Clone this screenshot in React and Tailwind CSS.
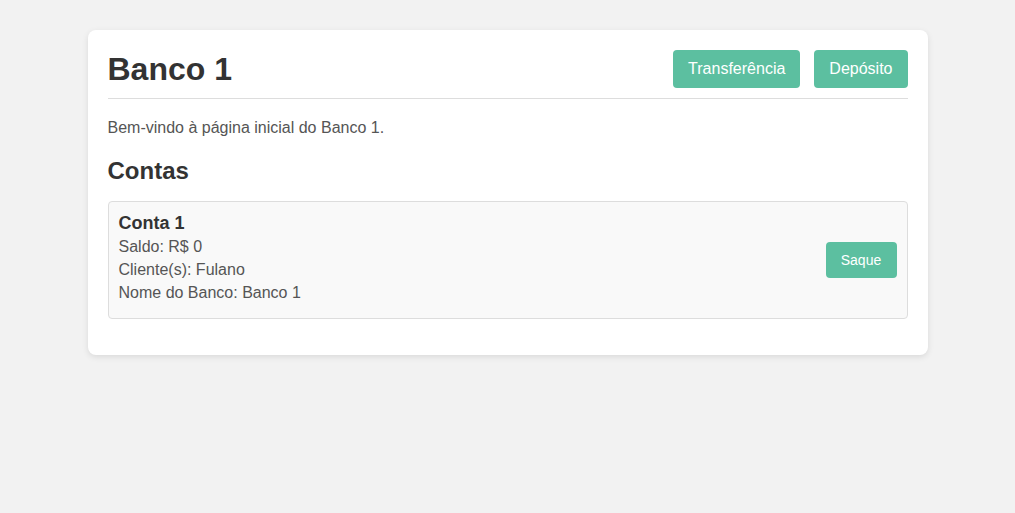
import React from 'react';

const contas = [
  { id: 1, nome: 'Conta 1', saldo: 0, clientes: 'Fulano', banco: 'Banco 1' },
];

const App = () => {
  return (
    <div className="min-h-screen bg-[#f2f2f2] pt-[30px] font-['Liberation_Sans',Arial,sans-serif]">
      <div className="mx-auto w-[840px] bg-white rounded-lg shadow-[0_2px_6px_rgba(0,0,0,0.1)] px-5 pt-5 pb-[36px]">
        <div className="flex items-center justify-between pb-[10px] border-b border-[#dddddd]">
          <h1 className="text-[32px] leading-[38px] font-bold text-[#333333]">Banco 1</h1>
          <div className="flex items-center gap-[14px]">
            <button className="h-[38px] px-[15px] rounded bg-[#5cbfa0] text-white text-[16px]">
              Transferência
            </button>
            <button className="h-[38px] px-[15px] rounded bg-[#5cbfa0] text-white text-[16px]">
              Depósito
            </button>
          </div>
        </div>

        <p className="mt-[19px] text-[16px] leading-[19px] text-[#555555]">
          Bem-vindo à página inicial do Banco 1.
        </p>

        <h2 className="mt-[20px] text-[24px] leading-[28px] font-bold text-[#333333]">Contas</h2>

        {contas.map((conta) => (
          <div
            key={conta.id}
            className="mt-[16px] flex items-center justify-between border border-[#dddddd] rounded bg-[#f9f9f9] px-[10px] pt-[9px] pb-[14px]"
          >
            <div>
              <h3 className="text-[18px] leading-[24px] font-bold text-[#333333]">{conta.nome}</h3>
              <p className="text-[16px] leading-[23px] text-[#555555]">Saldo: R$ {conta.saldo}</p>
              <p className="text-[16px] leading-[23px] text-[#555555]">Cliente(s): {conta.clientes}</p>
              <p className="text-[16px] leading-[23px] text-[#555555]">Nome do Banco: {conta.banco}</p>
            </div>
            <button className="mt-[5px] h-[36px] w-[71px] rounded bg-[#5cbfa0] text-white text-[14px]">
              Saque
            </button>
          </div>
        ))}
      </div>
    </div>
  );
};

export default App;
